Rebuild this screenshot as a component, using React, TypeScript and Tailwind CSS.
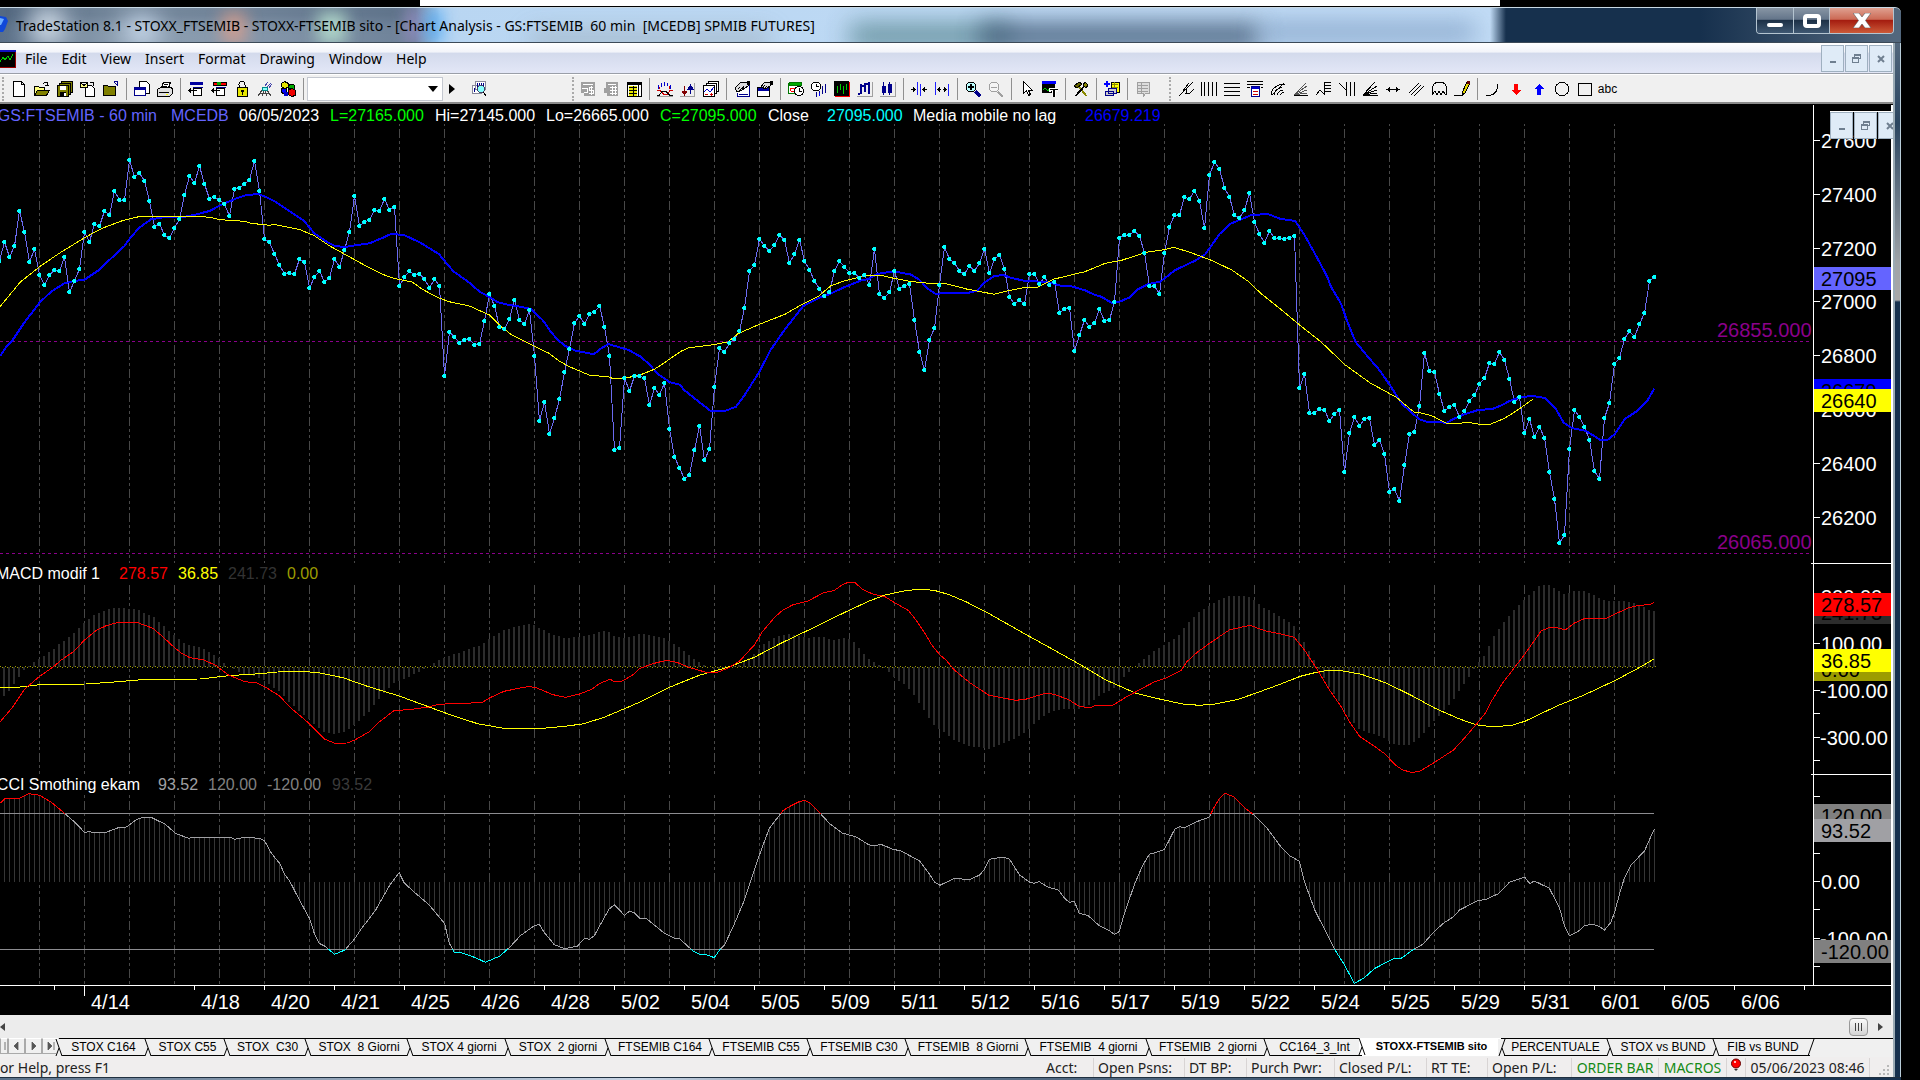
import type { ReactNode } from "react";

/* ---------- chart data ---------- */

// One close per bar, bars are 5px apart. Values are thirds of a pixel below the pane origin.
const CLOSES = [
  422, 366, 411, 378, 272, 336, 426, 387, 465, 495, 465, 450, 453, 411, 516, 483, 447, 336, 366, 312, 318, 272, 285, 213, 240, 240,
  120, 171, 159, 183, 243, 321, 312, 345, 354, 323, 297, 225, 168, 189, 137, 192, 237, 231, 240, 252, 288, 207, 204, 192, 180,
  123, 213, 357, 366, 402, 435, 462, 459, 462, 417, 426, 504, 471, 453, 486, 474, 417, 441, 390, 336, 228, 318, 306, 300, 270,
  273, 237, 270, 261, 497, 471, 453, 465, 462, 477, 504, 477, 497, 768, 636, 651, 669, 660, 657, 675, 672, 603, 522, 558, 621,
  627, 597, 540, 600, 612, 570, 708, 903, 846, 942, 894, 837, 756, 687, 609, 588, 612, 582, 576, 558, 621, 708, 990, 984, 774,
  813, 768, 768, 774, 855, 804, 825, 789, 927, 1011, 1044, 1077, 1065, 990, 918, 1020, 987, 801, 684, 696, 669, 657, 633, 564,
  453, 435, 357, 378, 393, 375, 345, 360, 429, 402, 360, 423, 450, 483, 507, 528, 516, 453, 423, 441, 459, 459, 474, 465, 495,
  387, 522, 534, 516, 453, 507, 498, 492, 600, 696, 750, 659, 624, 495, 381, 417, 429, 453, 462, 438, 453, 429, 387, 459, 417,
  405, 447, 531, 552, 540, 552, 462, 462, 492, 471, 495, 486, 579, 567, 564, 693, 645, 600, 621, 609, 567, 603, 600, 546, 354,
  345, 345, 333, 348, 399, 498, 498, 522, 399, 321, 285, 285, 231, 237, 213, 243, 324, 165, 126, 147, 204, 231, 285, 294, 270,
  219, 306, 342, 369, 333, 354, 354, 357, 354, 348, 804, 762, 879, 879, 867, 870, 903, 882, 870, 1056, 939, 891, 918, 897, 894,
  975, 960, 1002, 1116, 1107, 1143, 1035, 942, 936, 858, 699, 753, 756, 822, 873, 861, 855, 891, 873, 843, 825, 792, 774, 729,
  732, 696, 720, 777, 846, 831, 939, 897, 951, 921, 954, 1056, 1137, 1269, 1245, 987, 870, 891, 921, 960, 1053, 1077, 894, 849,
  732, 714, 657, 633, 651, 612, 579, 483, 471,
];

// Curves are stored in three pages of 640px, 1568 units wide each.
const FAST_MA = [
  "0,708 15,682 30,662 60,607 97,548 125,515 158,490 182,483 207,479 240,452 268,420 305,378 317,357 341,323 370,298 400,292 445,292 475,285 513,273 550,250 580,235 605,225 633,222 650,230 675,245 710,274 745,303 770,340 800,365 820,378 845,381 875,375 905,370 935,355 958,342 990,345 1030,368 1075,402 1110,453 1150,488 1175,515 1199,531 1220,547 1245,554 1275,560 1300,567 1330,601 1345,628 1365,658 1385,678 1410,692 1435,698 1455,703 1470,688 1490,672 1515,681 1540,690",
  "0,709 20,730 45,763 72,786 97,794 110,812 145,846 172,872 210,872 235,860 255,828 292,756 320,690 355,628 400,558 440,533 465,522 500,502 540,482 560,477 580,462 605,457 635,457 665,464 685,480 705,506 725,522 745,519 805,518 825,513 845,487 868,468 890,465 910,474 945,483 1000,486 1030,497 1055,498 1090,511 1115,525 1130,530 1155,548 1175,545 1200,532 1220,508 1245,492 1275,485 1310,451 1360,422 1385,403 1400,377 1420,342 1445,312 1480,294 1500,284 1540,283",
  "0,296 37,303 60,345 85,400 115,468 125,500 150,552 165,605 185,665 215,710 245,752 270,797 300,853 340,897 360,905 408,908 430,894 450,884 485,870 520,867 545,855 560,844 590,831 620,828 650,834 675,865 695,908 715,924 750,933 785,960 802,960 820,943 845,897 875,873 900,842 917,806",
];
const SLOW_MA = [
  "0,560 20,530 50,486 97,440 145,400 207,353 250,325 300,302 340,290 355,291 365,289 490,289 518,293 540,299 600,304 615,310 660,316 670,313 735,329 770,347 808,378 845,403 900,440 935,462 965,475 1010,486 1035,508 1070,531 1100,545 1150,558 1199,585 1225,617 1255,646 1300,673 1345,700 1370,723 1395,740 1445,766 1490,770 1500,775 1530,775",
  "0,765 35,748 60,728 100,694 120,683 180,674 215,666 240,641 290,614 355,583 400,551 437,529 468,497 500,483 530,474 550,466 590,466 615,473 660,484 700,489 750,491 800,507 868,523 895,514 940,503 975,501 1015,477 1090,455 1140,430 1180,421 1240,397 1280,390 1308,382 1350,398 1400,421 1450,450 1490,484 1520,519",
  "0,566 47,614 100,665 160,735 220,788 285,832 328,876 350,880 375,889 408,910 440,910 460,907 490,913 515,913 550,895 580,872 620,837",
];
const MACD = [
  "0,486 30,443 60,388 97,349 130,321 150,300 180,275 207,240 235,212 260,197 290,187 335,187 375,205 400,232 425,260 445,280 465,293 500,300 530,317 560,345 600,365 630,369 650,381 685,408 710,441 758,491 795,537 820,550 850,549 868,541 905,515 930,485 965,452 1010,448 1050,441 1075,433 1130,430 1180,428 1199,414 1235,394 1275,384 1297,379 1315,384 1355,404 1385,412 1420,402 1450,388 1470,370 1495,358 1505,365 1525,363 1550,345",
  "0,325 35,310 65,301 90,307 120,322 165,338 185,339 215,325 245,302 280,255 300,215 330,172 350,150 375,134 410,124 450,98 475,92 495,75 510,67 527,68 545,88 570,102 600,110 620,125 658,152 675,178 697,218 715,255 735,285 750,300 770,330 810,370 855,406 880,412 920,421 945,418 970,408 995,400 1015,403 1050,419 1075,438 1100,444 1115,437 1160,435 1190,412 1235,382 1260,366 1290,353 1325,332 1340,305 1365,277 1400,246 1445,209 1495,196 1530,212",
  "0,221 35,232 60,270 92,330 120,388 150,440 170,485 195,529 235,562 255,580 285,617 300,629 320,637 340,635 360,621 385,602 425,570 455,530 483,490 503,460 520,420 545,370 570,330 598,285 640,213 660,202 680,204 700,209 720,190 745,176 800,175 825,160 855,143 880,136 905,134 917,127",
];
const SIGNAL = [
  "0,383 50,381 105,373 210,372 280,366 360,358 490,357 560,347 635,341 680,336 740,334 780,338 840,353 900,379 978,408 1040,436 1100,463 1170,491 1240,506 1310,507 1385,499 1430,491 1480,472 1530,446",
  "0,426 72,382 145,346 215,322 280,292 345,250 420,206 500,158 560,124 600,105 650,92 685,88 720,91 755,103 800,126 860,164 940,220 1010,267 1080,315 1140,359 1215,400 1280,419 1330,432 1370,436 1410,432 1465,418 1505,401",
  "0,373 50,349 95,335 120,331 150,332 200,343 260,369 320,405 380,445 440,477 480,494 525,501 570,495 600,484 680,437 745,405 820,362 880,323 917,296",
];
const CCI = [
  "0,730 12,716 47,715 70,701 97,706 125,726 160,762 182,785 207,817 218,815 235,818 260,817 290,803 310,801 335,778 350,772 370,772 405,793 430,820 462,835 475,832 565,832 575,838 598,832 635,835 648,842 665,880 685,910 697,942 710,964 730,1012 758,1075 770,1120 782,1150 795,1158 820,1183 845,1170 868,1138 885,1107 920,1051 955,975 978,938 990,968 1015,997 1050,1033 1089,1090 1101,1150 1113,1177 1130,1178 1165,1193 1189,1207 1225,1188 1250,1160 1275,1127 1309,1097 1321,1093 1334,1118 1358,1154 1383,1166 1415,1158 1432,1135 1444,1138 1456,1127 1475,1085 1492,1048 1505,1034 1530,1066 1542,1054 1555,1059",
  "0,1075 15,1075 60,1120 85,1135 97,1136 130,1173 145,1183 160,1183 182,1193 195,1170 207,1155 230,1095 256,1020 280,930 300,860 317,805 350,752 370,737 390,725 403,721 415,728 440,758 464,790 495,819 530,831 560,854 575,857 590,853 620,868 640,873 685,903 705,935 722,967 735,976 770,955 807,959 832,945 844,928 856,898 890,891 905,897 930,945 954,966 966,970 978,965 1000,982 1025,990 1040,1015 1052,1027 1064,1024 1076,1060 1098,1067 1125,1097 1150,1112 1162,1123 1174,1115 1187,1060 1211,975 1230,920 1248,883 1270,875 1285,868 1310,808 1322,800 1334,803 1360,787 1395,771 1405,745 1420,715 1433,700 1455,710 1480,742 1505,766 1535,802",
  "0,857 23,887 47,903 60,965 85,1050 110,1110 135,1170 158,1215 182,1270 205,1255 231,1226 280,1195 297,1195 325,1170 350,1153 375,1118 400,1090 425,1070 440,1050 483,1023 505,1018 535,1001 562,967 585,957 600,952 612,971 623,963 660,985 685,1045 697,1098 709,1128 733,1112 746,1097 765,1093 780,1098 795,1110 810,1088 820,1057 831,1005 843,957 860,915 893,873 917,807",
];

type Pt = [number, number];

const decode = (pages: string[], origin: number): Pt[] =>
  pages.flatMap((page, i) =>
    page.split(" ").map((pair): Pt => {
      const [u, v] = pair.split(",").map(Number);
      return [i * 640 + (u * 640) / 1568, origin + v / 3];
    }),
  );

const at = (pts: Pt[], x: number) => {
  const found = pts.findIndex((p) => p[0] >= x);
  if (found < 0) return pts[pts.length - 1][1];
  const i = Math.max(1, found);
  const [a, b] = [pts[i - 1], pts[i]];
  return a[1] + ((b[1] - a[1]) * (x - a[0])) / (b[0] - a[0]);
};

const toPoints = (pts: Pt[]) => pts.map(([x, y]) => `${x.toFixed(1)},${y.toFixed(1)}`).join(" ");

const closes: Pt[] = CLOSES.map((v, i) => [5 * i - 0.5, Math.round(120 + v / 3)]);
const fastMa = decode(FAST_MA, 120);
const slowMa = decode(SLOW_MA, 120);
const macd = decode(MACD, 560);
const signal = decode(SIGNAL, 560);
const cci = decode(CCI, 560);
const bars = Array.from({ length: 331 }, (_, i) => 4.5 + 5 * i);
const gridX = Array.from({ length: 36 }, (_, i) => 39.5 + 45 * i);

/* ---------- chart panes ---------- */

function Grid({ top, bottom, offset }: { top: number; bottom: number; offset: number }) {
  return (
    <g stroke="#484848" strokeDasharray="9 3 3 3 3 3" strokeDashoffset={offset}>
      {gridX.map((x) => (
        <line key={x} x1={x} x2={x} y1={top} y2={bottom} />
      ))}
    </g>
  );
}

type Mark = { y: number; text?: string };
type Badge = { y: number; text: string; fill: string; base: number };

function Axis({ top, marks, badges }: { top: number; marks: Mark[]; badges: Badge[] }) {
  return (
    <svg className="h-full w-20 shrink-0 border-r-2 border-white" shapeRendering="crispEdges" fontSize="20">
      <g transform={`translate(0 ${-top})`}>
        <path d={`M.5 ${top}v460`} stroke="#fff" />
        {marks.map((m) => (
          <g key={m.y}>
            <path d={`M1 ${m.y + 0.5}h6`} stroke="#fff" />
            {m.text && (
              <text x={m.text[0] === "-" ? 7 : 8} y={m.y + 8} fill="#fff">
                {m.text}
              </text>
            )}
          </g>
        ))}
        {badges.map((b) => (
          <g key={b.text}>
            <rect x="1" y={b.y} width="77" height="23" fill={b.fill} />
            <text x="8" y={b.base} fill="#000">
              {b.text}
            </text>
          </g>
        ))}
      </g>
    </svg>
  );
}

function Pane({ className, header, plot, axis }: { className: string; header: ReactNode; plot: ReactNode; axis: ReactNode }) {
  return (
    <section className={`flex ${className}`}>
      <div className="flex min-w-0 flex-1 flex-col">
        <div className="flex h-[21px] shrink-0 whitespace-pre text-base leading-[21px]">{header}</div>
        {plot}
      </div>
      {axis}
    </section>
  );
}

const plotClass = "block min-h-0 w-full flex-1 overflow-visible";

function PricePane() {
  return (
    <Pane
      className="h-[458px]"
      header={
        <>
          <span className="flex w-[157px] shrink-0 justify-end overflow-hidden text-[#6464ff]">GS:FTSEMIB - 60 min</span>
          <span className="w-[82px] shrink-0 pl-[14px] text-[#6464ff]">MCEDB</span>
          <span className="w-[91px] shrink-0 text-white">06/05/2023</span>
          <span className="w-[105px] shrink-0 text-[#00ff00]">L=27165.000</span>
          <span className="w-[111px] shrink-0 text-white">Hi=27145.000</span>
          <span className="w-[114px] shrink-0 text-white">Lo=26665.000</span>
          <span className="w-[108px] shrink-0 text-[#00ff00]">C=27095.000</span>
          <span className="w-[59px] shrink-0 text-white">Close</span>
          <span className="w-[86px] shrink-0 text-[#00ffff]">27095.000</span>
          <span className="w-[172px] shrink-0 text-white">Media mobile no lag</span>
          <span className="text-[#0000ff]">26679.219</span>
        </>
      }
      plot={
        <svg className={plotClass} shapeRendering="crispEdges" fill="none" role="img" aria-label="Price chart">
          <g transform="translate(0 -126)">
            <Grid top={124} bottom={563} offset={19} />
            <g stroke="#8b008b" strokeDasharray="3 3">
              <path d="M0 341.5H1809" />
              <path d="M0 553.5H1809" />
            </g>
            <g fill="#8b008b" fontSize="20">
              <text x="1717" y="337">26855.000</text>
              <text x="1717" y="549">26065.000</text>
            </g>
            <polyline points={toPoints(closes)} stroke="#6a6af0" />
            <polyline points={toPoints(fastMa)} stroke="#0000ff" strokeWidth="2" />
            <polyline points={toPoints(slowMa)} stroke="#ffff00" />
            <path d={closes.map(([x, y]) => `M${x - 2.5} ${y - 1}h1v-1h3v4h-3v-1h-1z`).join("")} fill="#00ffff" />
          </g>
        </svg>
      }
      axis={
        <Axis
          top={105}
          marks={[
            { y: 140, text: "27600" },
            { y: 194, text: "27400" },
            { y: 248, text: "27200" },
            { y: 301, text: "27000" },
            { y: 355, text: "26800" },
            { y: 409, text: "26600" },
            { y: 463, text: "26400" },
            { y: 517, text: "26200" },
          ]}
          badges={[
            { y: 267, text: "27095", fill: "#6464ff", base: 286 },
            { y: 379, text: "26679", fill: "#0000ff", base: 398 },
            { y: 389, text: "26640", fill: "#ffff00", base: 408 },
          ]}
        />
      }
    />
  );
}

function MacdPane() {
  return (
    <Pane
      className="h-[211px]"
      header={
        <>
          <span className="flex w-[100px] shrink-0 justify-end overflow-hidden text-white">MACD modif 1</span>
          <span className="w-[78px] shrink-0 pl-[19px] text-[#ff0000]">278.57</span>
          <span className="w-[50px] shrink-0 text-[#ffff00]">36.85</span>
          <span className="w-[59px] shrink-0 text-[#333]">241.73</span>
          <span className="text-[#9c9c00]">0.00</span>
        </>
      }
      plot={
        <svg className={plotClass} shapeRendering="crispEdges" fill="none" role="img" aria-label="MACD chart">
          <g transform="translate(0 -584)">
            <Grid top={585} bottom={774} offset={0} />
            <path
              stroke="#2c2c2c"
              strokeWidth="2"
              d={bars.map((x) => `M${x - 0.5} 667V${(667 + at(macd, x) - at(signal, x)).toFixed(0)}`).join("")}
            />
            <path d="M0 666.5H1656" stroke="#9c9c00" strokeDasharray="1 4" />
            <path d="M2 667.5H1656" stroke="#9c9c00" strokeDasharray="1 4" />
            <polyline points={toPoints(signal)} stroke="#ffff00" />
            <polyline points={toPoints(macd)} stroke="#ff0000" />
          </g>
        </svg>
      }
      axis={
        <Axis
          top={563}
          marks={[
            { y: 596, text: "300.00" },
            { y: 643, text: "100.00" },
            { y: 690, text: "-100.00" },
            { y: 713 },
            { y: 737, text: "-300.00" },
            { y: 760 },
          ]}
          badges={[
            { y: 601, text: "241.73", fill: "#2c2c2c", base: 620 },
            { y: 593, text: "278.57", fill: "#ff0000", base: 612 },
            { y: 658, text: "0.00", fill: "#9c9c00", base: 677 },
            { y: 649, text: "36.85", fill: "#ffff00", base: 668 },
          ]}
        />
      }
    />
  );
}

function CciPane() {
  return (
    <Pane
      className="h-[211px]"
      header={
        <>
          <span className="flex w-[140px] shrink-0 justify-end overflow-hidden text-white">CCI Smothing ekam</span>
          <span className="w-[68px] shrink-0 pl-[18px] text-[#a0a0a4]">93.52</span>
          <span className="w-[59px] shrink-0 text-[#808080]">120.00</span>
          <span className="w-[65px] shrink-0 text-[#808080]">-120.00</span>
          <span className="text-[#3a3a3a]">93.52</span>
        </>
      }
      plot={
        <svg className={plotClass} shapeRendering="crispEdges" fill="none" role="img" aria-label="CCI chart">
          <defs>
            <clipPath id="above">
              <rect x="0" y="780" width="1900" height="34" />
            </clipPath>
            <clipPath id="below">
              <rect x="0" y="949" width="1900" height="40" />
            </clipPath>
          </defs>
          <g transform="translate(0 -795)">
            <Grid top={795} bottom={985} offset={18} />
            <path stroke="#353535" d={bars.map((x) => `M${x} 881.5V${at(cci, x).toFixed(0)}`).join("")} />
            <path d="M0 813.5H1654M0 949.5H1654" stroke="#8c8c90" />
            <polyline points={toPoints(cci)} stroke="#a0a0a4" />
            <polyline points={toPoints(cci)} stroke="#ff0000" clipPath="url(#above)" />
            <polyline points={toPoints(cci)} stroke="#00ffff" clipPath="url(#below)" />
          </g>
        </svg>
      }
      axis={
        <Axis
          top={774}
          marks={[
            { y: 796 },
            { y: 853 },
            { y: 881, text: "0.00" },
            { y: 909 },
            { y: 938, text: "-100.00" },
            { y: 966 },
          ]}
          badges={[
            { y: 804, text: "120.00", fill: "#808080", base: 823 },
            { y: 819, text: "93.52", fill: "#a0a0a4", base: 838 },
            { y: 940, text: "-120.00", fill: "#808080", base: 959 },
          ]}
        />
      }
    />
  );
}

const DATES = "4/18 4/20 4/21 4/25 4/26 4/28 5/02 5/04 5/05 5/09 5/11 5/12 5/16 5/17 5/19 5/22 5/24 5/25 5/29 5/31 6/01 6/05 6/06".split(" ");

function DateAxis() {
  return (
    <svg className="block h-[30px] w-full border-r-2 border-white" shapeRendering="crispEdges" fontSize="20" fill="#fff">
      <path d="M0 .5H3000M54.5 0V5M84.5 0V11" stroke="#fff" />
      <path d={[...DATES, ""].map((_, i) => `M${194.5 + 70 * i} 0V5`).join("")} stroke="#fff" />
      <text x="91" y="24">4/14</text>
      {DATES.map((d, i) => (
        <text key={d} x={201 + 70 * i} y="24">
          {d}
        </text>
      ))}
    </svg>
  );
}

/* ---------- toolbar icons: [path, stroke, fill] on a 16px grid ---------- */

type Shape = [string, string, string?];
const K = "#000";
const N = "none";
const B = "#00008b";
const G = "#a0a0a0";

const ICONS: Record<string, Shape[]> = {
  new: [["M2.5 .5h8l3 3v12h-11zM10.5 .5v3h3", K, "#fff"]],
  open: [["M.5 14.5v-9h4l1 1h5v3", K, "#ffff80"], ["M.5 14.5l3-5h12l-3 5z", K, "#808000"], ["M8.5 3.5l2-2h3v3M11 4.5h4", K]],
  saveAll: [["M4.5 .5h11v11h-11z", K, "#808000"], ["M2.5 2.5h11v11h-11z", K, "#808000"], ["M.5 4.5h11v11h-11z", K, "#808000"], ["M3 5h6v4h-6z", N, "#fff"], ["M3 11h6v4h-6z", N, K], ["M7 12h2v3h-2z", N, "#fff"]],
  insertDoc: [["M5.5 4.5h6l3 3v8h-9z", K, "#fff"], ["M.5 1.5h7v5h-7zM.5 1.5l3.5 3 3.5-3", K, "#ffff80"], ["M10 1.5h3v3", K]],
  folderUp: [["M.5 14.5v-10h4l1 1h7v9z", K, "#808000"], ["M10.5 2.5l2-2M11 .5h4M14.5 .5v4M11 1l4 4", B]],
  preview: [["M5.5 .5h7l3 3v9h-10z", K, "#fff"], ["M.5 6.5h11v8h-11z", B, "#fff"], ["M1 7h10v2h-10z", N, "#0000a0"]],
  print: [["M4.5 7l2-6h7l-2 6", K, "#fff"], ["M7 3.5h4M6 5.5h4", K], ["M.5 8.5l3-2h11l1 2v4l-3 3h-12z", K, "#e0e0e0"], ["M2 11.5h10", K], ["M9 13h2v1h-2z", N, "#ffff00"]],
  winBack: [["M2 1h13v3h-13z", N, "#0000a0"], ["M5 6h10v1h-10z", N, B], ["M5.5 7.5h8v7h-8z", K, "#fff"], ["M1 9.5h8M3 7.5l-2 2 2 2", K]],
  winBackMix: [["M2 1h13v3h-13z", K, "#f00"], ["M6 1h4v3h-4z", N, "#0a0"], ["M5 6h10v1h-10z", N, B], ["M5.5 7.5h8v7h-8z", K, "#fff"], ["M1 9.5h8M3 7.5l-2 2 2 2", K]],
  lock: [["M5 7V3.5q0-3 3-3t3 3V7", K], ["M3.5 6.5h10v9h-10z", K, "#e6e600"], ["M7 9h3v2h-1v3h-1v-3h-1z", N, K]],
  dish: [["M1 15l4-6h5l4 6M3 12h9M5 15l2-6M10 15l-2-6", "#444"], ["M5.5 6.5h5v3h-5z", "#088", "#8ff"], ["M8 5l3-4M10 6l4-4M12 7l3-4", "#44a"]],
  cubes: [["M4.5 .5l4 2v4l-4 1-3-2v-3z", K, "#e6e600"], ["M10 3l4 1v4l-3 1-3-2z", K, "#0a0"], ["M1.5 7.5h5v5h-3l-2-1z", K, "#00f"], ["M8.5 8.5l4-1 3 2v5l-4 1-3-2z", K, "#e00"], ["M4 11h4v4h-4z", N, "#00c"]],
  find: [["M1.5 4.5h9v8h-9zM4.5 .5h10v8h-10z", "#889", "#fff"], ["M6 2v4M8 2v4M10 2v4M12 2v4M3 7v4", B], ["M6.5 8a3.5 3.5 0 1 0 7 0a3.5 3.5 0 1 0-7 0", "#446", "#8ff"], ["M12 11l3.5 4.5", K]],
  grayMoney: [["M1 1h14v14h-11v-3h-3z", N, G], ["M3 3.5h10M9 6.5h4M9 6.5v3h4v3h-4M11.5 5v9M2 7.5h5v4h-3", "#fff"]],
  grayCal: [["M3 1h12v14h-11v-3h-3v-5h2z", N, G], ["M5 3.5h8M7 6.5h7M7 9.5h7M7 12.5h7M9.5 5v9M12.5 5v9", "#fff"]],
  yellowList: [["M1.5 1.5h14v14h-14z", K, "#fff"], ["M1 1h15v3h-15z", N, K], ["M3 5h8v10h-8z", N, "#e6e600"], ["M3 6.5h8M3 9.5h8M3 12.5h8M7 5v10", K], ["M12.5 4v11", K]],
  waves: [["M1.5 8V4M4.5 6V2M7.5 5V1M10.5 5V2M13.5 8V4", "#00c"], ["M2.5 8V6M12.5 5v3", "#c00"], ["M0 9.5h3l4 4h3l3-4h3", "#c00"], ["M0 14.5h2l3-4h4l4 4h3", K], ["M0 15.5h16V3", G]],
  arrows: [["M4.5 5v8M2 10h5l-2.5 4z", "#800000", "#800000"], ["M10.5 13V5M8 8h5l-2.5-4z", B, B], ["M0 15.5h14.5V2", G]],
  sheets: [["M5.5 .5h10v10h-10z", K, "#fff"], ["M3.5 2.5h10v10h-10z", K, "#fff"], ["M.5 4.5h11v11h-11z", K, "#fff"], ["M1 11l3-3 3 3 4-5", "#00c"], ["M2 13.5h3M7 13.5h3M8.5 12v3", "#c00"]],
  handSheet: [["M6.5 4.5h9v11h-12v-4", B, "#fff"], ["M1 7l5-5 8-1v4l-6 4-5 2z", K, "#ddd"], ["M4 8l2-2M6 9l2-2M8 8l2-3", K], ["M5 13.5h9", B], ["M13 0h3v4h-3z", N, K]],
  handWin: [["M.5 6.5h12v9h-12z", K, "#fff"], ["M1 7h11v3h-11z", N, "#0000a0"], ["M4 6l3-4 7-1v3l-5 4z", K, "#ddd"], ["M6 6l2-2M8 7l2-2", K], ["M13 0h3v4h-3z", N, K]],
  calClock: [["M.5 2.5h12v10h-12z", "#070", "#fff"], ["M1 1h12v3h-12z", "#070", "#0a0"], ["M2 7h4v3h-3z", "#f00"], ["M6.5 10a4 4 0 1 0 9 0a4 4 0 1 0-9 0", K, "#fff"], ["M11 7v3.5h3", K]],
  clockBars: [["M.5 5.5a4.5 4.5 0 1 0 9 0a4.5 4.5 0 1 0-9 0", K, "#fff"], ["M5 2.5v3h3", K], ["M5.5 11v5M8.5 10v5M11.5 5v8M14.5 3v9", B], ["M8.5 12v3", "#00f"]],
  redChart: [["M0 0h15v15h-15z", N, K], ["M.5 15.5h15V.5", "#f00"], ["M3.5 5v7M6.5 3v6M9.5 5v8M12.5 3v6", "#0c0"]],
  ohlc: [["M3 3h2v10h-2zM7 2h2v9h-2zM11 1h2v12h-2zM1 12h2v2h-2zM9 2h4v2h-4zM5 4h2v2h-2z", N, B], ["M0 15.5h15.5V1", G]],
  candles: [["M3.5 1v13M9.5 1v13", B], ["M2 5h3v6h-3zM8 3h3v8h-3z", B, B], ["M0 15.5h15.5V1", G]],
  squeeze: [["M6.5 1v13M9.5 3v12", "#22f"], ["M0 8.5h5M2.5 6v5M3.5 7v3M16 8.5h-5M13.5 6v5M12.5 7v3", K]],
  expand: [["M1.5 1v13M14.5 3v12", "#22f"], ["M3 8.5h4M9 8.5h4M5.5 6v5M4.5 7v3M10.5 6v5M11.5 7v3", K]],
  zoomIn: [["M1 6a5 5 0 1 0 10 0a5 5 0 1 0-10 0", K, "#bff"], ["M3 5h6v2h-6zM5 3h2v6h-2z", N, K], ["M10 10l5 5M9.5 11l5 5M11 9.5l5 5", B]],
  zoomOut: [["M1 6a5 5 0 1 0 10 0a5 5 0 1 0-10 0", G, "#f4f4f4"], ["M3 6h6", G], ["M10 10l5 5M9.5 11l5 5", G]],
  pointer: [["M4.5 .5v12l3-3 2 5 2-1-2-4h4z", K, "#fff"]],
  chartText: [["M0 0h14v3h-14z", N, "#00f"], ["M0 3h13v9h-13z", N, K], ["M1 9l2-2 3 3 2-3 3 2", "#0c0"], ["M7 7h9v3h-1v-1h-2v7h-3v-7h-2v1h-1z", "#fff", K]],
  tools: [["M3 3l10 12M4 3l10 12", "#880"], ["M13 4L3 15M12 4L2 15", K], ["M1 5l5-4 3 2-5 4z", K, "#660"], ["M12 1l3 3-2 3-3-3z", K, "#880"]],
  addSheet: [["M0 2h6v2h-6zM2 0h2v6h-2z", N, "#00f"], ["M7 1h8v10h-8z", K, "#ffff00"], ["M8 3.5h6M8 6.5h6M10.5 1v9", "#880"], ["M4.5 7.5h8v5h-8zM1.5 10.5h8v4h-8z", B, "#ccc"]],
  grayNote: [["M2.5 1.5h12v11h-4l-2 3v-3h-6z", G, "#ddd"], ["M3 4.5h10M3 7.5h10M3 10.5h10M6.5 2v10", G]],
  pitchfork: [["M1 15L15 1M5 10L11 2M7 12h5l4-4M8 8v4", K]],
  vlines: [["M.5 1v14M3.5 1v14M7.5 1v14M11.5 1v14M15.5 1v14", K]],
  hlines: [["M0 2.5h16M0 6.5h16M0 10.5h16M0 14.5h16", K]],
  calcLines: [["M0 .5h16M0 3.5h16", K], ["M4.5 5.5h8v10h-8z", B, "#fff"], ["M5 6h7v2h-7z", N, "#00c"], ["M6 10.5h5M6 13.5h5", "#c00"], ["M0 6.5h3M14 6.5h2", K]],
  arcs: [["M1 14q0-6 6-9t8-1M4 14q1-6 8-8M7 14q1-4 6-5M10 14q1-2 4-3M2 14L14 2", K]],
  fanDots: [["M1 14.5h14", K], ["M1 14L13 2M1 14L14 5M1 14L14 9M1 14L14 12", "#555"]],
  fiboExt: [["M0 14l4-5 4 4V1", K], ["M9 1.5h6M9 4.5h6M9 7.5h6M9 10.5h6", K]],
  timeExt: [["M0 2l7 7M7.5 1v14M11.5 1v14M15.5 1v14", K]],
  fan: [["M1 14.5h15M1 14L13 1M1 14L15 5M1 14L15 9M1 14l14-2", K]],
  hArrow: [["M1 8.5h14M4.5 6v5M3.5 7v3M2.5 8v1M11.5 6v5M12.5 7v3M13.5 8v1", K]],
  channel: [["M1 12L11 2M3 14L13 4M6 15L16 5", K]],
  cycles: [["M1.5 14V8q0-7 7-7t7 7v6M1 14l3-4 2 4 2-4 2 4 2-4 3 4", K]],
  pencil: [["M0 14.5h9", K], ["M8 12L13 1l3 1-5 10-3 2z", K, "#e6d800"], ["M13 0h3v3h-3z", N, "#600"]],
  curve: [["M1 14.5h4q8-2 8-12", K]],
  down: [["M6 3h4v6h3l-5 5-5-5h3z", N, "#f00"]],
  up: [["M6 14h4V8h3L8 3 3 8h3z", N, "#00f"]],
  circle: [["M1 8a7 6.5 0 1 0 14 0a7 6.5 0 1 0-14 0", K]],
  square: [["M1.5 2.5h13v12h-13z", K]],
};

const GROUPS: string[][] = [
  ["new", "open", "saveAll", "insertDoc", "folderUp"],
  ["preview", "print"],
  ["winBack", "winBackMix", "lock", "dish", "cubes"],
];
const CHART_GROUPS: string[][] = [
  ["grayMoney", "grayCal", "yellowList"],
  ["waves", "arrows", "sheets"],
  ["handSheet", "handWin"],
  ["calClock", "clockBars", "redChart", "ohlc", "candles"],
  ["squeeze", "expand"],
  ["zoomIn", "zoomOut"],
  ["pointer", "chartText"],
  ["tools"],
  ["addSheet"],
  ["grayNote"],
];
const DRAW_GROUPS: string[][] = [
  ["pitchfork", "vlines", "hlines", "calcLines", "arcs", "fanDots", "fiboExt", "timeExt", "fan", "hArrow", "channel", "cycles", "pencil"],
  ["curve", "down", "up", "circle", "square"],
];

function Tool({ name }: { name: string }) {
  return (
    <button type="button" aria-label={name} className="flex h-6 w-[23px] shrink-0 items-center justify-center">
      <svg width="16" height="16" viewBox="0 0 16 16" fill="none" shapeRendering="crispEdges">
        {ICONS[name].map(([d, stroke, fill], i) => (
          <path key={i} d={d} stroke={stroke} fill={fill ?? "none"} />
        ))}
      </svg>
    </button>
  );
}

const Sep = () => <span className="ml-1 mr-[3px] h-[22px] w-px shrink-0 bg-[#909090]" />;
const Grip = () => <span className="h-6 w-0 shrink-0 border-l-2 border-dotted border-[#aaa]" />;

function Groups({ groups }: { groups: string[][] }) {
  return (
    <>
      {groups.map((g, i) => (
        <div key={g[0]} className="flex shrink-0 items-center">
          {i > 0 && <Sep />}
          {g.map((n) => (
            <Tool key={n} name={n} />
          ))}
        </div>
      ))}
    </>
  );
}

function Toolbar() {
  return (
    <div className="flex h-[30px] items-center border-b-2 border-t border-b-[#8a8a8a] border-t-white bg-[#f0f0f0] pl-0.5">
      <Grip />
      <span className="w-[3px] shrink-0" />
      <Groups groups={GROUPS} />
      <Sep />
      <div className="relative shrink-0">
        <select aria-label="Symbol" className="block h-6 w-[136px] appearance-none border border-[#c4c8d0] bg-white">
          <option></option>
        </select>
        <svg className="pointer-events-none absolute right-[5px] top-[9px]" width="10" height="6">
          <path d="M0 0h10L5 6z" />
        </svg>
      </div>
      <button type="button" aria-label="Go" className="ml-1.5 flex w-[18px] shrink-0">
        <svg width="6" height="10">
          <path d="M0 0l6 5-6 5z" />
        </svg>
      </button>
      <Tool name="find" />
      <span className="w-[82px] shrink-0" />
      <Grip />
      <span className="w-0.5 shrink-0" />
      <Groups groups={CHART_GROUPS} />
      <span className="w-[15px] shrink-0" />
      <Grip />
      <span className="w-[3px] shrink-0" />
      <Groups groups={DRAW_GROUPS} />
      <button type="button" className="w-[23px] text-center text-xs leading-none">
        abc
      </button>
    </div>
  );
}

/* ---------- window chrome ---------- */

function MdiButtons() {
  const cls = "flex h-full w-[23px] shrink-0 items-center justify-center border border-[#9fb0c0] bg-[#dfebf7]";
  return (
    <div className="flex h-full gap-px">
      <button type="button" aria-label="Minimize chart" className={cls}>
        <svg width="8" height="10"><path d="M1 7h6v2h-6z" fill="#6f7f90" /></svg>
      </button>
      <button type="button" aria-label="Restore chart" className={cls}>
        <svg width="9" height="9" fill="none" stroke="#6f7f90" shapeRendering="crispEdges">
          <path d="M2.5 3V.5h6v4h-2M2 1.5h7M.5 3.5h6v5h-6zM0 4.5h7" />
        </svg>
      </button>
      <button type="button" aria-label="Close chart" className={cls}>
        <svg width="8" height="8" stroke="#6f7f90" strokeWidth="2"><path d="M1 1l6 6M7 1l-6 6" /></svg>
      </button>
    </div>
  );
}

function TitleBar() {
  return (
    <header className="relative flex h-9 shrink-0 overflow-hidden rounded-tr-md border-b border-t border-b-[#3c4a58] border-t-[#c8d8e4] bg-[linear-gradient(90deg,#5b7088_0px,#8ea0b2_120px,#8496aa_260px,#6d8198_415px,#b9d6f2_440px,#c2dcf6_1490px,#16304d_1506px,#16304d_1700px,#52677d_1893px)] font-['Noto_Sans',sans-serif]">
      <span className="absolute left-0 top-0 h-2 w-[410px] bg-[#2b405a] opacity-60 blur-sm" />
      <span className="absolute left-8 top-0 h-9 w-8 bg-[#e4eef8] opacity-90 blur-md" />
      <span className="absolute left-32 top-2 h-7 w-7 bg-[#dcecff] opacity-90 blur-md" />
      <span className="absolute left-[222px] top-1 h-8 w-6 bg-[#e8a088] opacity-70 blur-sm" />
      <span className="absolute left-[318px] top-1 h-8 w-7 bg-[#b4dccc] opacity-90 blur-sm" />
      <span className="absolute left-[408px] top-0 h-9 w-3 bg-[#a890d0] opacity-80 blur-sm" />
      <span className="absolute left-[426px] top-0 h-9 w-4 bg-[#50a8f0] opacity-90 blur-sm" />
      <span className="absolute left-[530px] top-6 h-4 w-[240px] bg-[#8f9ba4] opacity-60 blur-md" />
      <span className="absolute left-[850px] top-4 h-6 w-[160px] bg-[#5f8c96] opacity-90 blur-md" />
      <span className="absolute left-[980px] top-4 h-6 w-[280px] bg-[#3d5672] opacity-90 blur-md" />
      <span className="absolute left-[1260px] top-4 h-4 w-[215px] bg-[#6f90b8] opacity-80 blur-md" />
      <svg className="absolute left-0 top-2" width="9" height="16">
        <path d="M0 0l6 1 2 4-3 8-2 3H0z" fill="#1048d8" />
        <path d="M0 2l4 1-3 6H0z" fill="#70b0ff" />
      </svg>
      <h1 className="relative whitespace-pre pl-4 text-sm leading-[35px] text-black">
        TradeStation 8.1 - STOXX_FTSEMIB - STOXX-FTSEMIB sito - [Chart Analysis - GS:FTSEMIB  60 min  [MCEDB] SPMIB FUTURES]
      </h1>
      <div className="relative ml-auto mr-[7px] flex h-[26px] overflow-hidden rounded-b border border-t-0 border-[#b4c4d0]">
        <button type="button" aria-label="Minimize" className="flex w-[37px] items-end justify-center border-r border-[#b4c4d0] bg-[linear-gradient(#8795a4,#64758a_45%,#1d3147_50%,#3f5872)] pb-1.5">
          <span className="h-1 w-4 rounded-sm bg-white" />
        </button>
        <button type="button" aria-label="Maximize" className="flex w-9 items-center justify-center border-r border-[#b4c4d0] bg-[linear-gradient(#8795a4,#64758a_45%,#1d3147_50%,#3f5872)]">
          <span className="h-3.5 w-[18px] rounded-sm border-4 border-white" />
        </button>
        <button type="button" aria-label="Close" className="flex w-[63px] items-center justify-center bg-[linear-gradient(#dfa090,#cc6a55_45%,#a51d10_50%,#cc5a38)]">
          <svg width="18" height="15" viewBox="0 0 18 15">
            <path d="M0 0h6l3 4 3-4h6l-5.5 7.5L18 15h-6l-3-4-3 4H0l5.5-7.5z" fill="#fff" stroke="#555" strokeWidth=".6" />
          </svg>
        </button>
      </div>
    </header>
  );
}

function MenuBar() {
  return (
    <nav className="flex h-[31px] shrink-0 items-center border-b border-[#9a9fa8] bg-[linear-gradient(#ffffff,#f2f4fa_30%,#d3daec_34%,#e3e7f7)] pt-px font-['Noto_Sans',sans-serif] text-sm">
      <svg width="18" height="18" className="-ml-0.5 shrink-0" shapeRendering="crispEdges">
        <path d="M0 0h18v18H0z" fill="#000" />
        <path d="M0 0h18v2H0z" fill="#1010c0" />
        <path d="M2 12l3-5 2 3 3-4 2 4 3-6" stroke="#0c0" fill="none" />
        <path d="M17.5 2v15.5H0" stroke="#900" fill="none" />
      </svg>
      <div className="ml-[9px] flex gap-3.5">
        {["File", "Edit", "View", "Insert", "Format", "Drawing", "Window", "Help"].map((m) => (
          <button type="button" key={m}>
            {m}
          </button>
        ))}
      </div>
      <div className="ml-auto mr-px h-[27px]">
        <MdiButtons />
      </div>
    </nav>
  );
}

/* ---------- bottom strips ---------- */

function ScrollBar() {
  return (
    <div className="flex h-[23px] items-center bg-[#ececec]">
      <button type="button" aria-label="Scroll left" className="w-5">
        <svg width="5" height="8"><path d="M5 0L0 4l5 4z" fill="#444" /></svg>
      </button>
      <button type="button" aria-label="Scroll position" className="ml-auto flex h-[18px] w-[19px] items-center justify-center rounded-sm border border-[#999] bg-[linear-gradient(#fafafa,#d4d4d4)]">
        <svg width="9" height="8" shapeRendering="crispEdges"><path d="M1.5 0v8M4.5 0v8M7.5 0v8" stroke="#444" /></svg>
      </button>
      <button type="button" aria-label="Scroll right" className="flex w-[25px] justify-center">
        <svg width="5" height="8"><path d="M0 0l5 4-5 4z" fill="#444" /></svg>
      </button>
    </div>
  );
}

const TABS: [string, string][] = [
  ["STOX C164", "w-[89px]"],
  ["STOX C55", "w-[79px]"],
  ["STOX  C30", "w-[81px]"],
  ["STOX  8 Giorni", "w-[102px]"],
  ["STOX 4 giorni", "w-[98px]"],
  ["STOX  2 giorni", "w-[100px]"],
  ["FTSEMIB C164", "w-[104px]"],
  ["FTSEMIB C55", "w-[98px]"],
  ["FTSEMIB C30", "w-[98px]"],
  ["FTSEMIB  8 Giorni", "w-[120px]"],
  ["FTSEMIB  4 giorni", "w-[121px]"],
  ["FTSEMIB  2 giorni", "w-[118px]"],
  ["CC164_3_Int", "w-[95px]"],
  ["STOXX-FTSEMIB sito", "w-[139px]"],
  ["PERCENTUALE", "w-[109px]"],
  ["STOX vs BUND", "w-[106px]"],
  ["FIB vs BUND", "w-[94px]"],
];
const ACTIVE = 13;

function Tabs() {
  return (
    <div className="flex h-[19px] bg-[#f0f0f0]">
      <div className="flex shrink-0">
        {["M4 3v8M5 7", "M9 3L5 7l4 4z", "M6 3l4 4-4 4z", "M5 3l4 4-4 4zM11 3v8"].map((d, i) => (
          <button
            type="button"
            key={d}
            aria-label={["First", "Previous", "Next", "Last"][i] + " tab"}
            className={`${i ? "w-[17px]" : "w-2"} h-4 border border-[#aaa] border-t-white bg-[#f0f0f0]`}
          >
            <svg width="14" height="14" className="block"><path d={d} fill="#555" stroke="#555" strokeWidth=".8" /></svg>
          </button>
        ))}
      </div>
      <div role="tablist" className="flex flex-1 border-t border-black">
        {TABS.map(([label, width], i) => (
          <div key={label} className={`relative shrink-0 ${width} ${i === ACTIVE ? "-mt-px h-[18px] bg-white" : "h-[17px] border-b border-black"}`}>
            <button
              type="button"
              role="tab"
              aria-selected={i === ACTIVE}
              className={`block w-full whitespace-pre text-center leading-[17px] ${i === ACTIVE ? "text-[11px] font-bold" : "text-xs"}`}
            >
              {label}
            </button>
            <svg className="absolute -left-1 top-0" width="9" height="17" fill="none" stroke="#000">
              <path d="M1 0h7l-1 17h-6z" fill={i === ACTIVE ? "#fff" : "#f0f0f0"} stroke="none" />
              <path d={i === ACTIVE + 1 ? "M8 0L2 17M5 9l3 8" : "M1 0l6 17M4 9l-3 8"} />
            </svg>
          </div>
        ))}
        <svg width="9" height="17" className="-ml-1" stroke="#000"><path d="M8 0L2 17" /></svg>
      </div>
    </div>
  );
}

const CELLS: [string, string][] = [
  ["Acct:", "w-[52px]"],
  ["Open Psns:", "w-[91px]"],
  ["DT BP:", "w-[62px]"],
  ["Purch Pwr:", "w-[88px]"],
  ["Closed P/L:", "w-[92px]"],
  ["RT TE:", "w-[61px]"],
  ["Open P/L:", "w-[84px]"],
];

function StatusBar() {
  return (
    <footer className="flex h-5 items-center whitespace-nowrap bg-[#f0eeee] pt-px font-['Noto_Sans',sans-serif] text-sm leading-[19px] text-[#222]">
      <span className="flex w-[110px] justify-end overflow-hidden">For Help, press F1</span>
      <div className="ml-auto flex">
        {CELLS.map(([t, w]) => (
          <span key={t} className={`${w} shrink-0 border-r border-[#d8d4d4] pl-1`}>
            {t}
          </span>
        ))}
        <button type="button" className="w-[87px] shrink-0 border-r border-[#d8d4d4] text-center text-[#158a15]">ORDER BAR</button>
        <button type="button" className="w-[68px] shrink-0 border-r border-[#d8d4d4] text-center text-[#158a15]">MACROS</button>
        <span className="flex w-[19px] shrink-0 justify-center border-r border-[#d8d4d4]">
          <svg width="12" height="14">
            <circle cx="6" cy="5.5" r="4.5" fill="#f00" stroke="#600" />
            <circle cx="5" cy="4" r="1" fill="#fff" />
            <path d="M4 11h4l-2 2z" fill="#333" />
          </svg>
        </span>
        <span className="w-[124px] shrink-0 border-r border-[#d8d4d4] text-center">05/06/2023 08:46</span>
        <svg width="23" height="19" fill="#b8b8b8">
          <path d="M17 15h2v2h-2zM13 15h2v2h-2zM9 15h2v2H9zM17 11h2v2h-2zM13 11h2v2h-2zM17 7h2v2h-2z" />
        </svg>
      </div>
    </footer>
  );
}

export default function App() {
  return (
    <div className="flex min-h-screen flex-col overflow-hidden bg-black font-['Liberation_Sans',Arial,sans-serif]">
      <div className="ml-[420px] mr-[420px] h-[6px] shrink-0 bg-white" />
      <div className="mr-[19px] mt-px flex flex-1 flex-col">
        <TitleBar />
        <div className="flex flex-1">
          <div className="flex min-w-0 flex-1 flex-col">
            <MenuBar />
            <Toolbar />
            <main className="relative bg-black pt-px">
              <PricePane />
              <MacdPane />
              <CciPane />
              <DateAxis />
              <svg className="absolute right-0 top-0 h-[881px] w-[82px]" shapeRendering="crispEdges">
                <path d="M0 459.5h82M0 670.5h82" stroke="#fff" />
              </svg>
              <div className="absolute right-0 top-[7px] h-7 w-[63px] overflow-hidden border-t border-white">
                <MdiButtons />
              </div>
            </main>
            <ScrollBar />
            <Tabs />
            <StatusBar />
          </div>
          <div className="w-2 shrink-0 border-l-2 border-r border-l-[#9aaab4] border-r-[#b8ccd8] bg-[linear-gradient(#52677d_0px,#2a4560_80px,#a0a4a8_220px,#a8a8a8_257px,#16304d_259px,#16304d)]" />
        </div>
        <div className="h-[3px] shrink-0 border-t border-[#203040] bg-[linear-gradient(90deg,#5a7088,#c8d4e4_640px,#5a7088_960px,#16304d)]" />
      </div>
    </div>
  );
}
